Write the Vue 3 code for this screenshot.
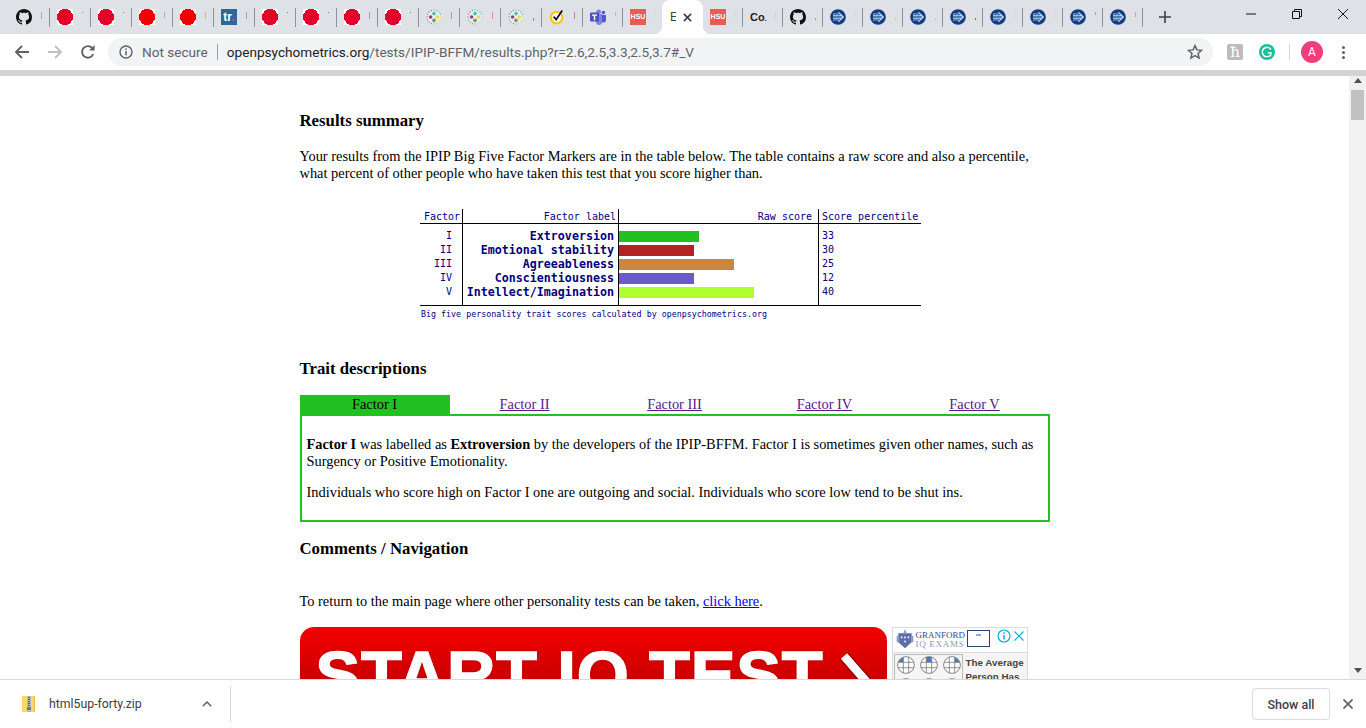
<script setup>
const github = "M8 0C3.58 0 0 3.58 0 8c0 3.54 2.29 6.53 5.47 7.59.4.07.55-.17.55-.38 0-.19-.01-.82-.01-1.49-2.01.37-2.53-.49-2.69-.94-.09-.23-.48-.94-.82-1.13-.28-.15-.68-.52-.01-.53.63-.01 1.08.58 1.23.82.72 1.21 1.87.87 2.33.66.07-.52.28-.87.51-1.07-1.78-.2-3.64-.89-3.64-3.95 0-.87.31-1.59.82-2.15-.08-.2-.36-1.02.08-2.12 0 0 .67-.21 2.2.82.64-.18 1.32-.27 2-.27.68 0 1.36.09 2 .27 1.53-1.04 2.2-.82 2.2-.82.44 1.1.16 1.92.08 2.12.51.56.82 1.27.82 2.15 0 3.07-1.87 3.75-3.65 3.95.29.25.54.73.54 1.48 0 1.07-.01 1.93-.01 2.2 0 .21.15.46.55.38A8.013 8.013 0 0016 8c0-4.42-3.58-8-8-8z";

// icon, tab width, colour and height of the clipped title letter
const tabsLeft = [
  { icon: "github", w: 41, mark: "#b9ab9b", h: 7 },
  { icon: "red", color: "#e4002b", w: 41, mark: "#8d8d8d", h: 1 },
  { icon: "red", color: "#e4002b", w: 41, mark: "#a5836d", h: 1 },
  { icon: "red", color: "#f00000", w: 41, mark: "#b8b39f", h: 6 },
  { icon: "red", color: "#f00000", w: 41, mark: "#c4bda6", h: 7 },
  { icon: "tr", w: 41, mark: "#b59c8c", h: 7 },
  { icon: "red", color: "#e4002b", w: 41, mark: "#777", h: 1 },
  { icon: "red", color: "#e4002b", w: 41, mark: "#777", h: 1 },
  { icon: "red", color: "#e4002b", w: 41, mark: "#b39f91", h: 7 },
  { icon: "red", color: "#e4002b", w: 41, mark: "#777", h: 1 },
  { icon: "dots", w: 41, mark: "#b39f91", h: 7 },
  { icon: "dots", w: 41, mark: "#c29a9a", h: 7 },
  { icon: "dots", w: 41, mark: "#a58a62", h: 3, low: true },
  { icon: "norton", w: 41, mark: "#b18ba3", h: 7 },
  { icon: "teams", w: 40, mark: "#d9b76d", h: 4 },
  { icon: "hsu", w: 39, mark: "#d9d9cf", h: 6, nosep: true },
];
const tabsRight = [
  { icon: "hsu", w: 40, mark: "#dcd9c2", h: 6 },
  { icon: "co", w: 40, mark: "#dcd6b8", h: 7 },
  { icon: "github", w: 40, mark: "#d99a3d", h: 2, low: true },
  { icon: "arrow", w: 40, mark: "#e0d9b5", h: 6 },
  { icon: "arrow", w: 40, mark: "#e2c87a", h: 2, low: true },
  { icon: "arrow", w: 40, mark: "#e6c97a", h: 2, low: true },
  { icon: "arrow", w: 40, mark: "#c8502a", h: 2, low: true },
  { icon: "arrow", w: 40, mark: "#eadca0", h: 7 },
  { icon: "arrow", w: 40, mark: "#eadca0", h: 7 },
  { icon: "arrow", w: 40, mark: "#e39a3a", h: 3 },
  { icon: "arrow", w: 40, mark: "#e2a84e", h: 5 },
];

// favicon with four big dots and a ring of tiny ones
const innerDots = [
  [8, 4.6, "#55b8b8"], [11.4, 8, "#e8d84a"], [8, 11.4, "#6f9a6a"], [4.6, 8, "#94436f"],
];
const outerDots = [];
for (let i = 0; i < 16; i++) {
  const a = (i / 16) * Math.PI * 2;
  const colors = ["#5fb5b0", "#d8d35a", "#7da86a", "#9a7090"];
  outerDots.push([8 + 7 * Math.sin(a), 8 - 7 * Math.cos(a), colors[Math.floor(i / 4)]]);
}
const arrowLines = [
  [5, 9], [6.5, 11], [8, 13], [9.5, 11], [11, 9],
];

const factors = [
  { num: "I", label: "Extroversion", bar: 80, color: "#22c122", score: 33 },
  { num: "II", label: "Emotional stability", bar: 75, color: "#b22222", score: 30 },
  { num: "III", label: "Agreeableness", bar: 115, color: "#cd853f", score: 25 },
  { num: "IV", label: "Conscientiousness", bar: 75, color: "#6a5acd", score: 12 },
  { num: "V", label: "Intellect/Imagination", bar: 135, color: "#adff2f", score: 40 },
];
const factorTabs = ["Factor I", "Factor II", "Factor III", "Factor IV", "Factor V"];
</script>

<template>
  <div class="browser">
    <div class="tabstrip">
      <template v-for="(list, side) in [tabsLeft, tabsRight]" :key="side">
        <div v-for="(t, i) in list" :key="i" class="tab" :style="{ width: t.w + 'px' }">
          <svg v-if="t.icon === 'github'" class="fav" viewBox="0 0 16 16"><path :d="github" fill="#111" /></svg>
          <svg v-else-if="t.icon === 'red'" class="fav" viewBox="0 0 16 16" shape-rendering="crispEdges">
            <rect width="16" height="16" fill="#fff" />
            <path :fill="t.color" d="M5 0h6v1h2v1h1v2h1v1h1v6h-1v1h-1v2h-1v1h-2v1H5v-1H3v-1H2v-2H1v-1H0V5h1V4h1V2h1V1h2z" />
          </svg>
          <span v-else-if="t.icon === 'tr'" class="fav tr">tr<i>.</i></span>
          <svg v-else-if="t.icon === 'dots'" class="fav" viewBox="0 0 16 16">
            <circle cx="8" cy="8" r="7.8" fill="#e9ebee" />
            <circle v-for="(d, k) in outerDots" :key="k" :cx="d[0]" :cy="d[1]" r=".7" :fill="d[2]" />
            <circle cx="8" cy="8" r="1.6" fill="#f2f2f2" />
            <circle v-for="d in innerDots" :key="d[2]" :cx="d[0]" :cy="d[1]" r="1.8" :fill="d[2]" />
          </svg>
          <svg v-else-if="t.icon === 'norton'" class="fav" viewBox="0 0 16 16">
            <circle cx="7.6" cy="8.6" r="5.8" fill="#fff" stroke="#fdc40f" stroke-width="2.2" />
            <path d="M4.6 7.6l2.6 3 6-9" fill="none" stroke="#111" stroke-width="1.8" />
          </svg>
          <svg v-else-if="t.icon === 'teams'" class="fav" viewBox="0 0 16 16">
            <circle cx="8.6" cy="2.8" r="2.4" fill="#7b83eb" />
            <circle cx="13.4" cy="3.6" r="1.8" fill="#5059c9" />
            <path d="M10 6h6v5a2.6 2.6 0 01-5 1z" fill="#5059c9" />
            <path d="M4 5h8v8a3 3 0 01-6 0z" fill="#7b83eb" />
            <rect x="0" y="3.6" width="9" height="9" rx="1" fill="#4b53bc" />
            <path d="M2 5.6h5v1.2H5.2v4.4H3.8V6.8H2z" fill="#fff" />
          </svg>
          <span v-else-if="t.icon === 'hsu'" class="fav hsu">HSU</span>
          <span v-else-if="t.icon === 'co'" class="fav co">Co<i>.</i></span>
          <svg v-else class="fav" viewBox="0 0 16 16">
            <circle cx="8" cy="8" r="7.8" fill="#123c85" />
            <path v-for="l in arrowLines" :key="l[0]" :d="`M3 ${l[0]}H${l[1]}`" stroke="#a9c8f2" stroke-width=".9" />
            <path d="M8.500 3.400L13.300 8 8.500 12.600" fill="none" stroke="#dbe9fb" stroke-width="1.1" />
          </svg>
          <span class="mark" :class="{ low: t.low }" :style="{ background: t.mark, height: t.h + 'px' }"></span>
          <span v-if="!t.nosep" class="sep"></span>
        </div>
        <div v-if="side === 0" :key="'active'" class="tab-active">
          <span class="tab-title">E</span>
          <svg class="tab-close" viewBox="0 0 10 10"><path d="M1 1l8 8M9 1l-8 8" stroke="#3c4043" stroke-width="1.8" /></svg>
        </div>
      </template>
      <svg class="newtab" viewBox="0 0 12 12"><path d="M6 0v12M0 6h12" stroke="#3c4043" stroke-width="1.6" /></svg>
      <div class="winctl">
        <svg viewBox="0 0 10 10"><path d="M0 5h10" stroke="#111" stroke-width="1" /></svg>
        <svg viewBox="0 0 10 10"><path d="M.5 2.500h7v7h-7zM2.500 2.500V.5h7v7h-2" fill="none" stroke="#111" stroke-width="1" /></svg>
        <svg viewBox="0 0 10 10"><path d="M0 0l10 10M10 0L0 10" stroke="#111" stroke-width="1" /></svg>
      </div>
    </div>

    <div class="toolbar">
      <svg class="nav first" viewBox="0 0 16 16"><path d="M15 8H2.500M8 2L2 8l6 6" fill="none" stroke="#5f6368" stroke-width="1.9" /></svg>
      <svg class="nav" viewBox="0 0 16 16"><path d="M1 8h12.500M8 2l6 6-6 6" fill="none" stroke="#bdc1c6" stroke-width="1.9" /></svg>
      <svg class="nav" viewBox="0 0 16 16">
        <path d="M13.200 10.200A5.800 5.800 0 1112.200 4" fill="none" stroke="#5f6368" stroke-width="1.9" />
        <path d="M14.600 1v5.600H9z" fill="#5f6368" />
      </svg>
      <div class="omnibox">
        <svg class="info" viewBox="0 0 14 14">
          <circle cx="7" cy="7" r="6" fill="none" stroke="#5f6368" stroke-width="1.4" />
          <path d="M7 6v4.200M7 3.600v1.400" stroke="#5f6368" stroke-width="1.5" />
        </svg>
        <span class="notsecure">Not secure</span>
        <span class="omni-sep"></span>
        <span class="url"><b>openpsychometrics.org</b>/tests/IPIP-BFFM/results.php?r=2.6,2.5,3.3,2.5,3.7#_V</span>
        <svg class="star" viewBox="0 0 16 16"><path d="M8 1.600l1.900 4.300 4.700.45-3.550 3.100 1.050 4.600L8 11.650 3.900 14.050l1.050-4.600L1.400 6.350l4.700-.45z" fill="none" stroke="#5f6368" stroke-width="1.5" /></svg>
      </div>
      <span class="ext-k">ħ</span>
      <span class="ext-g">
        <svg viewBox="0 0 16 16"><circle cx="8" cy="8" r="8" fill="#15c39a" /><path d="M11.900 5.600A4.600 4.600 0 108.200 12.600c2.400 0 3.900-1.600 3.900-3.700H8.600" fill="none" stroke="#fff" stroke-width="1.4" /></svg>
      </span>
      <span class="tool-sep"></span>
      <span class="avatar">A</span>
      <span class="menu"><i></i><i></i><i></i></span>
    </div>
    <div class="topline"></div>

    <div class="viewport">
      <main class="page">
        <h3 class="h-first">Results summary</h3>
        <p class="intro">Your results from the IPIP Big Five Factor Markers are in the table below. The table contains a raw score and also a percentile, what percent of other people who have taken this test that you score higher than.</p>

        <div class="chart">
          <div class="chart-head">
            <span class="c1">Factor</span>
            <span class="c2">Factor label</span>
            <span class="c3">Raw score</span>
            <span class="c4">Score percentile</span>
          </div>
          <div class="chart-body">
            <div class="col col1"><div v-for="f in factors" :key="f.num" class="row">{{ f.num }}</div></div>
            <div class="col col2"><div v-for="f in factors" :key="f.num" class="row">{{ f.label }}</div></div>
            <div class="col col3">
              <div v-for="f in factors" :key="f.num" class="row">
                <span class="bar" :style="{ width: f.bar + 'px', background: f.color }"></span>
              </div>
            </div>
            <div class="col col4"><div v-for="f in factors" :key="f.num" class="row">{{ f.score }}</div></div>
          </div>
          <div class="chart-foot">Big five personality trait scores calculated by openpsychometrics.org</div>
        </div>

        <h3 class="h-trait">Trait descriptions</h3>
        <div class="ftabs">
          <div v-for="(f, i) in factorTabs" :key="f" class="ftab" :class="{ on: i === 0 }">
            <template v-if="i === 0">{{ f }}</template>
            <a v-else href="#">{{ f }}</a>
          </div>
        </div>
        <div class="fbox">
          <p><b>Factor I</b> was labelled as <b>Extroversion</b> by the developers of the IPIP-BFFM. Factor I is sometimes given other names, such as Surgency or Positive Emotionality.</p>
          <p>Individuals who score high on Factor I one are outgoing and social. Individuals who score low tend to be shut ins.</p>
        </div>

        <h3 class="h-comments">Comments / Navigation</h3>
        <p class="back">To return to the main page where other personality tests can be taken, <a class="blue" href="#">click here</a>.</p>

        <div class="ads">
          <div class="banner">
            <span class="banner-text">START IQ TEST</span>
            <svg viewBox="0 0 30 60"><path d="M4 3l21 24-21 24" fill="none" stroke="#8f0000" stroke-width="11" /><path d="M4 3l21 24-21 24" fill="none" stroke="#fff" stroke-width="8.500" /></svg>
          </div>
          <div class="ad">
            <div class="ad-top">
              <svg class="crest" viewBox="0 0 20 24">
                <path d="M2 5h16v11l-8 7-8-7z" fill="#5d6fa8" />
                <path d="M10 0l2 5H8zM0 8h3v8H0zM17 8h3v8h-3z" fill="#8c9ac4" />
                <path d="M5 9h2v2H5zM9 9h2v2H9zM13 9h2v2h-2zM9 14h2v2H9z" fill="#fff" />
              </svg>
              <div class="ad-logo"><span>GRANFORD</span><span class="iq">IQ EXAMS</span></div>
              <div class="cert"><i></i></div>
              <svg class="adinfo" viewBox="0 0 14 14">
                <circle cx="7" cy="7" r="6" fill="#fff" stroke="#00aecd" stroke-width="1.2" />
                <path d="M7 6v4.600M7 3.200v1.500" stroke="#00aecd" stroke-width="1.4" />
              </svg>
              <svg class="adx" viewBox="0 0 10 10"><path d="M.5.5l9 9M9.500 .5l-9 9" stroke="#00aecd" stroke-width="1.1" /></svg>
            </div>
            <div class="ad-bottom">
              <div class="iq-grid">
                <svg v-for="n in 6" :key="n" viewBox="0 0 20 20">
                  <circle cx="10" cy="10" r="9.300" fill="#fff" />
                  <path v-if="n === 1" d="M7 1.300V7H1.300A9.300 9.300 0 017 1.300z" fill="#3d7cc9" />
                  <path v-if="n === 2" d="M7 1h6v6H7z" fill="#3d7cc9" />
                  <path v-if="n === 3" d="M13 1.300V7h5.700A9.300 9.300 0 0013 1.300z" fill="#3d7cc9" />
                  <path d="M7 1.200v17.600M13 1.200v17.600M1.200 7h17.600M1.200 13h17.600" stroke="#777" stroke-width=".9" fill="none" />
                  <circle cx="10" cy="10" r="9.300" fill="none" stroke="#777" />
                </svg>
              </div>
              <div class="ad-copy">The Average<br />Person Has</div>
            </div>
          </div>
        </div>
      </main>
      <div class="scrollbar">
        <svg class="sb-arrow" viewBox="0 0 8 5"><path d="M4 0l4 5H0z" fill="#505050" /></svg>
        <div class="thumb"></div>
        <svg class="sb-arrow down" viewBox="0 0 8 5"><path d="M0 0h8L4 5z" fill="#505050" /></svg>
      </div>
    </div>

    <div class="shelf">
      <svg class="zip" viewBox="0 0 14 16" shape-rendering="crispEdges">
        <rect width="13" height="16" fill="#f6d76b" />
        <rect x="12" width="1" height="16" fill="#e3b93f" />
        <rect x="5" width="4" height="16" fill="#b9b9b9" />
        <path d="M6 1h2v1H6zM6 3h2v1H6zM6 5h2v1H6zM6 7h2v1H6zM6 9h2v1H6z" fill="#555" />
        <rect x="5" y="11" width="4" height="3" fill="#777" />
      </svg>
      <span class="zipname">html5up-forty.zip</span>
      <svg class="chev" viewBox="0 0 10 6"><path d="M.8 5.200L5 1l4.200 4.200" fill="none" stroke="#5f6368" stroke-width="1.5" /></svg>
      <span class="shelf-sep"></span>
      <button class="showall">Show all</button>
      <svg class="shelf-x" viewBox="0 0 10 10"><path d="M.5.5l9 9M9.500 .5l-9 9" stroke="#5f6368" stroke-width="1.7" /></svg>
    </div>
  </div>
</template>

<style scoped>
.browser {
  width: 1366px;
  height: 728px;
  display: flex;
  flex-direction: column;
  overflow: hidden;
  background: #fff;
  font-family: Roboto, "Liberation Sans", sans-serif;
}

/* tab strip */
.tabstrip {
  height: 34px;
  flex: none;
  display: flex;
  align-items: flex-start;
  padding-left: 9px;
  background: #dee1e6;
}
.tab {
  height: 34px;
  flex: none;
  display: flex;
  align-items: flex-start;
  padding: 9px 0 0 7px;
  box-sizing: border-box;
}
.fav {
  width: 16px;
  height: 16px;
  flex: none;
  display: block;
}
.tr {
  background: #2a6a94;
  color: #fff;
  font: bold 12px/16px "Liberation Sans", sans-serif;
  text-align: center;
}
.tr i {
  color: #e0359a;
  font-style: normal;
}
.hsu {
  background: #ea5b50;
  color: #fff;
  font: bold 7px/16px "Liberation Sans", sans-serif;
  text-align: center;
}
.co {
  color: #222;
  font: bold 11px/16px "Liberation Sans", sans-serif;
  white-space: nowrap;
}
.co i {
  font-style: normal;
  font-size: 7px;
}
.mark {
  width: 1px;
  margin: 3px 0 0 9px;
  flex: none;
}
.mark.low {
  margin-top: 9px;
}
.sep {
  width: 1px;
  height: 19px;
  margin: -1px 0 0 auto;
  background: #8f9296;
  flex: none;
}
.tab-active {
  width: 41px;
  height: 34px;
  flex: none;
  position: relative;
  display: flex;
  align-items: center;
  padding-left: 8px;
  box-sizing: border-box;
  background: #fff;
  border-radius: 8px 8px 0 0;
}
.tab-active::before,
.tab-active::after {
  content: "";
  position: absolute;
  bottom: 0;
  width: 8px;
  height: 8px;
}
.tab-active::before {
  left: -8px;
  background: radial-gradient(circle at 0 0, #dee1e6 8px, #fff 8.5px);
}
.tab-active::after {
  right: -8px;
  background: radial-gradient(circle at 100% 0, #dee1e6 8px, #fff 8.5px);
}
.tab-title {
  width: 6px;
  overflow: hidden;
  font-size: 12px;
  color: #3c4043;
}
.tab-close {
  width: 9px;
  height: 9px;
  margin-left: 7px;
}
.newtab {
  width: 12px;
  height: 12px;
  margin: 11px 0 0 16px;
  flex: none;
}
.winctl {
  margin-left: auto;
  display: flex;
  gap: 36px;
  padding: 9px 18px 0 0;
}
.winctl svg {
  width: 10px;
  height: 10px;
}

/* toolbar */
.toolbar {
  height: 36px;
  flex: none;
  display: flex;
  align-items: center;
  background: #fff;
}
.nav {
  width: 16px;
  height: 16px;
  flex: none;
  margin-left: 17px;
}
.nav.first {
  margin-left: 14px;
}
.omnibox {
  width: 1105px;
  height: 28px;
  margin-left: 12px;
  flex: none;
  display: flex;
  align-items: center;
  box-sizing: border-box;
  padding-left: 11px;
  background: #f1f3f4;
  border-radius: 14px;
  font-size: 13.6px;
  color: #5f6368;
}
.info {
  width: 14px;
  height: 14px;
}
.notsecure {
  margin-left: 9px;
  white-space: nowrap;
}
.omni-sep {
  width: 1px;
  height: 16px;
  margin: 0 9px;
  background: #9aa0a6;
}
.url {
  white-space: nowrap;
}
.url b {
  font-weight: 400;
  color: #202124;
}
.star {
  width: 16px;
  height: 16px;
  margin-left: auto;
  margin-right: 10px;
}
.ext-k {
  width: 16px;
  height: 16px;
  margin-left: 14px;
  flex: none;
  background: #bcbcbc;
  border-radius: 2px;
  color: #fff;
  font: 15px/16px "DejaVu Serif", serif;
  text-align: center;
}
.ext-g {
  width: 16px;
  height: 16px;
  margin-left: 16px;
  flex: none;
}
.ext-g svg {
  display: block;
}
.tool-sep {
  width: 1px;
  height: 16px;
  margin-left: 14px;
  flex: none;
  background: #d5d7da;
}
.avatar {
  width: 22px;
  height: 22px;
  margin-left: 11px;
  flex: none;
  border-radius: 50%;
  background: #ee3f7c;
  color: #fff;
  font-size: 12px;
  line-height: 22px;
  text-align: center;
}
.menu {
  margin-left: 19px;
  display: flex;
  flex-direction: column;
  gap: 2px;
}
.menu i {
  width: 3px;
  height: 3px;
  border-radius: 50%;
  background: #5f6368;
}
.topline {
  height: 6px;
  flex: none;
  background: #d3d3d3;
}

/* page */
.viewport {
  flex: 1;
  min-height: 0;
  display: flex;
  overflow: hidden;
}
.page {
  width: 750px;
  margin-left: 299.5px;
  margin-right: 299.5px;
  flex: none;
  font: 14.4px/17px "Liberation Serif", "Times New Roman", serif;
  color: #000;
}
h3 {
  margin: 0;
  font-size: 16.8px;
  line-height: 20px;
  font-weight: bold;
}
.h-first {
  margin-top: 35px;
}
.intro {
  margin: 17px 0 0;
}
.chart {
  width: 501px;
  margin: 27px 0 0 120.5px;
  font-family: "DejaVu Sans Mono", "Liberation Mono", monospace;
  color: #000080;
}
.chart-head {
  display: grid;
  grid-template-columns: 43px 156px 200px 102px;
  height: 14px;
  font-size: 10px;
  line-height: 15px;
  border-bottom: 1px solid #000;
}
.chart-head span {
  border-right: 1px solid #000;
  white-space: nowrap;
  box-sizing: border-box;
}
.chart-head .c1,
.chart-head .c2 {
  text-align: right;
  padding-right: 2px;
}
.chart-head .c3 {
  text-align: right;
  padding-right: 6px;
}
.chart-head .c4 {
  border-right: none;
  padding-left: 3px;
}
.chart-body {
  display: grid;
  grid-template-columns: 43px 156px 200px 102px;
  height: 81px;
  border-bottom: 1px solid #000;
  box-sizing: content-box;
}
.col {
  padding-top: 5px;
  border-right: 1px solid #000;
  box-sizing: border-box;
}
.col4 {
  border-right: none;
  padding-left: 3px;
  font-size: 10px;
}
.row {
  height: 14px;
  line-height: 14px;
  white-space: nowrap;
}
.col1 {
  font-size: 10px;
  text-align: right;
  padding-right: 10px;
}
.col2 {
  font-size: 11.67px;
  font-weight: bold;
  text-align: right;
  padding-right: 4px;
}
.col3 {
  padding-top: 6px;
}
.col3 .row {
  display: flex;
  align-items: flex-start;
}
.bar {
  display: block;
  height: 11px;
  margin-top: 1px;
}
.chart-foot {
  margin: 3px 0 0 1px;
  font-size: 8.33px;
  line-height: 10px;
  white-space: nowrap;
}
.h-trait {
  margin-top: 40px;
}
.ftabs {
  margin-top: 16px;
  display: grid;
  grid-template-columns: repeat(5, 150px);
  height: 19px;
  line-height: 19px;
  text-align: center;
}
.ftab.on {
  background: #22c122;
}
.ftab a {
  color: #551a8b;
}
.fbox {
  height: 108px;
  box-sizing: border-box;
  border: 2px solid #22c122;
  padding: 20px 5px 0;
}
.fbox p {
  margin: 0 0 14px;
}
.h-comments {
  margin-top: 17px;
}
.back {
  margin: 34px 0 0;
}
.blue {
  color: #0000ee;
}
.ads {
  margin-top: 17px;
  display: flex;
  align-items: flex-start;
  gap: 5px;
}
.banner {
  width: 587px;
  height: 180px;
  flex: none;
  display: flex;
  align-items: flex-start;
  box-sizing: border-box;
  padding: 14px 0 0 16px;
  border-radius: 14px;
  background: linear-gradient(#f40000, #c80000 55px, #a00000);
  white-space: nowrap;
}
.banner-text {
  color: #fff;
  font: bold 67px/1 "Liberation Sans", sans-serif;
  letter-spacing: 0.8px;
  -webkit-text-stroke: 1.5px #fff;
  text-shadow: 0 0 3px #8f0000;
}
.banner svg {
  width: 30px;
  height: 60px;
  margin: 12px 0 0 17px;
  flex: none;
}
.ad {
  width: 136px;
  height: 120px;
  flex: none;
  box-sizing: border-box;
  border: 1px solid #dcdcdc;
  background: #fff;
}
.ad-top {
  height: 24px;
  display: flex;
  align-items: flex-start;
  padding: 1px 0 0 2px;
  box-sizing: border-box;
}
.crest {
  width: 20px;
  height: 20px;
  flex: none;
}
.ad-logo {
  display: flex;
  flex-direction: column;
  margin-left: 1px;
  width: 48px;
  font: 9px/9px "Liberation Serif", serif;
  color: #33498c;
  padding-top: 2px;
  white-space: nowrap;
}
.ad-logo .iq {
  color: #8b9ab8;
  letter-spacing: 0.7px;
}
.cert {
  width: 23px;
  height: 17px;
  box-sizing: border-box;
  margin: 1px 0 0 3px;
  border: 1px solid #2e4468;
  flex: none;
}
.cert i {
  display: block;
  width: 5px;
  height: 2px;
  margin: 3px auto;
  background: #9aa8c0;
}
.adinfo {
  width: 14px;
  height: 14px;
  margin-left: 7px;
  flex: none;
}
.adx {
  width: 10px;
  height: 10px;
  margin: 2px 0 0 3px;
  flex: none;
}
.ad-bottom {
  display: flex;
  padding: 1px 0 0 1px;
  background: #f5f5f5;
  height: 95px;
  box-sizing: border-box;
  border-top: 1px solid #dcdcdc;
}
.iq-grid {
  width: 69px;
  height: fit-content;
  display: grid;
  grid-template-columns: repeat(3, 18px);
  gap: 4px 5px;
  padding: 1px 0 0 2px;
  box-sizing: border-box;
  border: 1px solid #bbb;
}
.iq-grid svg {
  width: 18px;
  height: 18px;
}
.ad-copy {
  margin-left: 3px;
  font: bold 9.8px/14px "Liberation Sans", sans-serif;
  color: #444;
  padding-top: 2px;
  white-space: nowrap;
}
.scrollbar {
  width: 17px;
  flex: none;
  display: flex;
  flex-direction: column;
  align-items: center;
  background: #f1f1f1;
  position: relative;
}
.sb-arrow {
  width: 8px;
  height: 5px;
  margin-top: 2px;
  flex: none;
}
.sb-arrow.down {
  margin: auto 0 6px;
}
.thumb {
  width: 13px;
  height: 30px;
  margin-top: 7px;
  background: #c1c1c1;
}

/* download shelf */
.shelf {
  height: 49px;
  flex: none;
  box-sizing: border-box;
  display: flex;
  align-items: center;
  border-top: 1px solid #d9d9d9;
  background: #fff;
  color: #3c4043;
}
.zip {
  width: 14px;
  height: 16px;
  margin-left: 22px;
  flex: none;
}
.zipname {
  width: 92px;
  margin-left: 13px;
  font-size: 12.3px;
  white-space: nowrap;
}
.chev {
  width: 10px;
  height: 6px;
  margin-left: 61px;
  flex: none;
}
.shelf-sep {
  width: 1px;
  height: 36px;
  margin-left: 18px;
  background: #d5d7da;
  flex: none;
}
.showall {
  width: 78px;
  height: 32px;
  margin-left: auto;
  flex: none;
  border: 1px solid #dadce0;
  border-radius: 4px;
  background: #fff;
  color: #3c4043;
  font: 500 12.5px Roboto, sans-serif;
}
.shelf-x {
  width: 10px;
  height: 10px;
  margin: 0 13px 0 13px;
  flex: none;
}
</style>

<style>
html,
body {
  overflow: hidden;
}
</style>
